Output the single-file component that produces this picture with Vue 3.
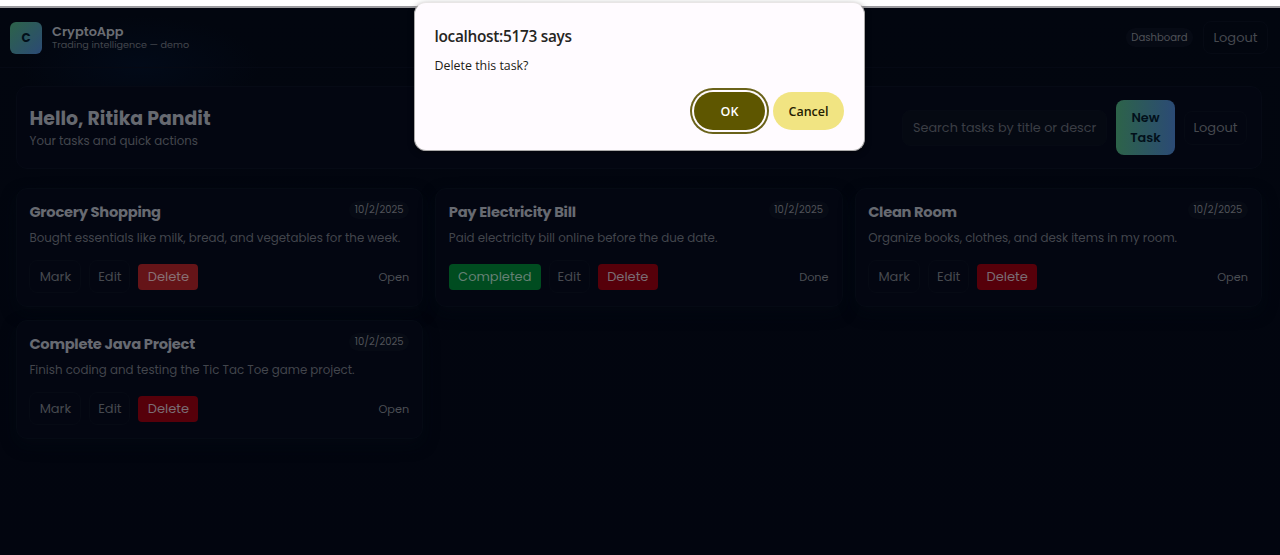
<script setup>
const tasks = [
  { id: 'a', title: 'Grocery Shopping', text: 'Bought essentials like milk, bread, and vegetables for the week.', done: false, hover: true },
  { id: 'b', title: 'Pay Electricity Bill', text: 'Paid electricity bill online before the due date.', done: true },
  { id: 'c', title: 'Clean Room', text: 'Organize books, clothes, and desk items in my room.', done: false },
  { id: 'd', title: 'Complete Java Project', text: 'Finish coding and testing the Tic Tac Toe game project.', done: false },
]
</script>

<template>
  <div class="page">
    <div class="chrome"></div>
    <header class="nav">
      <div class="logo">C</div>
      <div class="brand">
        <div class="name"><span>CryptoApp</span></div>
        <div class="tag"><span>Trading intelligence — demo</span></div>
      </div>
      <div class="pill dash"><span>Dashboard</span></div>
      <button class="ghost nav-out"><span>Logout</span></button>
    </header>
    <main>
      <section class="hero">
        <div class="hello">
          <h1><span>Hello, Ritika Pandit</span></h1>
          <p><span>Your tasks and quick actions</span></p>
        </div>
        <div class="search"><span>Search tasks by title or descr</span></div>
        <button class="new"><span>New</span><span>Task</span></button>
        <button class="ghost hero-out"><span>Logout</span></button>
      </section>
      <section class="grid">
        <article v-for="t in tasks" :key="t.id" class="card">
          <div class="top">
            <h2><span>{{ t.title }}</span></h2>
            <div class="pill date"><span>10/2/2025</span></div>
          </div>
          <p class="desc"><span>{{ t.text }}</span></p>
          <div class="actions">
            <button v-if="t.done" class="solid green"><span>Completed</span></button>
            <button v-else class="ghost mark"><span>Mark</span></button>
            <button class="ghost edit"><span>Edit</span></button>
            <button class="solid red" :class="{ hover: t.hover }"><span>Delete</span></button>
            <div class="status"><span>{{ t.done ? 'Done' : 'Open' }}</span></div>
          </div>
        </article>
      </section>
    </main>
    <div class="dialog">
      <div class="d-title"><span>localhost:5173 says</span></div>
      <div class="d-text"><span>Delete this task?</span></div>
      <div class="d-actions">
        <button class="ok"><span>OK</span></button>
        <button class="cancel"><span>Cancel</span></button>
      </div>
    </div>
  </div>
</template>

<style>
body { margin: 0; background: #02050f; overflow: hidden; }
</style>

<style scoped>
* { box-sizing: border-box; margin: 0; }
.page {
  position: relative; width: 1280px; height: 555px; overflow: hidden;
  font-family: Poppins, Inter, "Open Sans", sans-serif; color: #42454c;
  background:
    radial-gradient(ellipse 120px 50px at 140px 66px, #020a18 0%, transparent 100%),
    linear-gradient(180deg, #02060f 0%, #02050f 100%);
}
button { font: inherit; color: inherit; border: 0; background: none; padding: 0; }
span { white-space: nowrap; }
.chrome { height: 8px; background: #fff; border-bottom: 2px solid #9b9b9f; }
.nav {
  height: 60px; display: flex; align-items: center; padding: 0 12px 0 10px;
  border-bottom: 1px solid #050914;
}
.logo {
  width: 32px; height: 32px; border-radius: 6px; display: grid; place-items: center;
  background: linear-gradient(135deg, #2d6349, #2b4a75); color: #02101a;
  font-size: 12px; font-weight: 700;
}
.brand { margin-left: 10px; flex: 1; padding-bottom: 0; }
.name { font-size: 12.9px; line-height: 14px; font-weight: 600; color: #6a6d73; }
.tag { font-size: 9.65px; line-height: 11px; color: #43464d; }
.pill {
  display: flex; align-items: center; justify-content: center; border-radius: 9px;
  background: #060a14; font-size: 10px; color: #505258;
}
.dash { width: 67px; height: 19px; margin-right: 10px; font-size: 10.1px; }
.ghost {
  display: flex; align-items: center; justify-content: center; height: 33px;
  border: 1px solid #060a14; border-radius: 8px; font-size: 13px; color: #46494f;
}
.nav-out { width: 65px; height: 33px; }
main { padding: 18px 18px 0 16px; }
.hero {
  height: 83px; border: 1px solid #060a15; border-radius: 11px; background: #030611;
  display: flex; align-items: center; padding: 0 14px 0 12.5px;
}
.hello { flex: 1; padding-top: 1px; }
h1 { font-size: 18.9px; line-height: 24px; font-weight: 700; color: #666970; }
.hello p { font-size: 11.8px; line-height: 18px; margin-top: 1px; color: #44474e; }
.search {
  width: 205px; height: 36px; border-radius: 8px; background: #050912; border: 1px solid #060a14;
  padding-left: 10px; display: flex; align-items: center; font-size: 12.8px; color: #3b3e45; overflow: hidden;
}
.new {
  width: 59px; height: 55px; margin: 0 9px 0 9px; border-radius: 8px;
  background: linear-gradient(90deg, #2d6349, #2b4a75); color: #02101a;
  display: flex; flex-direction: column; align-items: center; justify-content: center;
  font-size: 12.8px; line-height: 19.5px; font-weight: 600;
}
.hero-out { width: 63px; height: 34px; }
.grid { display: grid; grid-template-columns: repeat(3, 1fr); gap: 13.5px 12.2px; margin-top: 19px; }
.card {
  height: 118.8px; border: 1px solid #050a14; border-radius: 11px; background: #030611;
  padding: 12px 13px 0 12.4px; box-shadow: 0 6px 16px rgba(4, 11, 20, .45);
}
.top { display: flex; justify-content: space-between; align-items: flex-start; height: 26px; }
h2 { font-size: 14.7px; line-height: 22px; font-weight: 700; letter-spacing: -.28px; color: #676a71; }
.date { width: 60px; height: 18px; }
.desc { font-size: 11.83px; line-height: 22px; height: 22px; color: #42454c; }
.actions { display: flex; align-items: center; gap: 8px; height: 33px; margin-top: 11.2px; }
.mark { width: 52px; }
.edit { width: 41px; }
.solid { height: 26px; border-radius: 4px; font-size: 13px; display: flex; align-items: center; justify-content: center; }
.red { width: 60px; background: #56000a; color: #7a6d74; }
.red.hover { background: #651418; color: #887074; }
.green { width: 92px; background: #004c20; color: #668074; }
.status { margin-left: auto; padding-top: 1px; font-size: 11.3px; color: #4b4e54; }
.dialog {
  position: absolute; left: 414px; top: 2px; width: 450.5px; height: 148.5px;
  border: 1px solid #aaa9a8; border-top-color: #e8e5e5; border-radius: 12px; background: #fffbff;
  font-family: "Segoe UI", "Open Sans", "Noto Sans", sans-serif; color: #1d1c16;
  padding: 23px 19.5px 0 19.5px; box-shadow: 0 2px 6px rgba(0, 0, 0, .4);
}
.d-title { font-size: 15.4px; line-height: 22px; font-weight: 600; letter-spacing: -.3px; color: #26251f; }
.d-text { font-size: 12.4px; line-height: 18px; margin-top: 9px; }
.d-actions { display: flex; justify-content: flex-end; gap: 8px; margin-top: 17px; font-size: 12.5px; font-weight: 600; }
.d-actions button { width: 71px; height: 38px; border-radius: 19px; display: flex; align-items: center; justify-content: center; }
.ok { background: #5e5600; color: #fff; box-shadow: 0 0 0 2px #fffbff, 0 0 0 4px #6a621a; }
.cancel { background: #f1e482; color: #242000; }
</style>
